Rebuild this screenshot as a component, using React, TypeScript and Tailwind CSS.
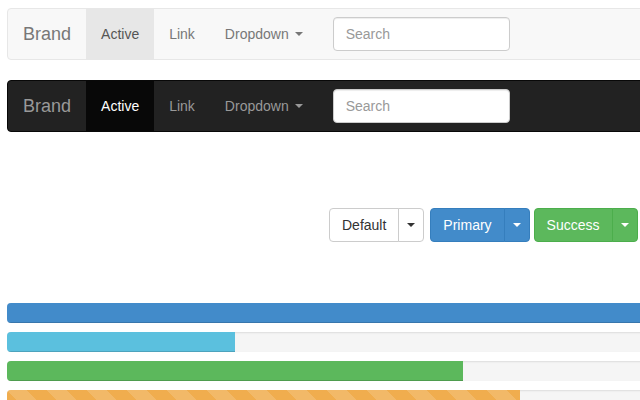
import React from "react";

const font = { fontFamily: '"Liberation Sans", Arial, Helvetica, sans-serif' };

function Caret({ color }: { color: string }) {
  return (
    <span
      className="inline-block h-0 w-0 align-middle border-l-4 border-r-4 border-t-4 border-l-transparent border-r-transparent"
      style={{ borderTopColor: color }}
    />
  );
}

function Navbar({ inverse }: { inverse?: boolean }) {
  const wrap = inverse
    ? "bg-[#222222] border-[#080808]"
    : "bg-[#f8f8f8] border-[#e7e7e7]";
  const brand = inverse ? "text-[#999999]" : "text-[#777777]";
  const link = inverse ? "text-[#999999]" : "text-[#777777]";
  const active = inverse
    ? "bg-[#080808] text-white"
    : "bg-[#e7e7e7] text-[#555555]";
  return (
    <div className={`flex h-[52px] w-[1140px] items-stretch rounded border ${wrap}`}>
      <div className={`flex items-center px-[15px] text-[18px] leading-5 ${brand}`}>Brand</div>
      <div className={`flex items-center px-[15px] text-[14px] leading-5 ${active}`}>Active</div>
      <div className={`flex items-center px-[15px] text-[14px] leading-5 ${link}`}>Link</div>
      <div className={`flex items-center gap-[6px] px-[15px] text-[14px] leading-5 ${link}`}>
        Dropdown <Caret color={inverse ? "#999999" : "#777777"} />
      </div>
      <div className="flex items-center px-[15px]">
        <input
          placeholder="Search"
          className="h-[34px] w-[177px] rounded border border-[#cccccc] bg-white px-3 text-[14px] text-[#555555] shadow-[inset_0_1px_1px_rgba(0,0,0,0.075)] outline-none placeholder:text-[#999999]"
          style={font}
        />
      </div>
    </div>
  );
}

type BtnKind = "default" | "primary" | "success";

function SplitButton({
  label,
  kind,
  className = "",
}: {
  label: string;
  kind: BtnKind;
  className?: string;
}) {
  const styles: Record<BtnKind, string> = {
    default: "bg-white border-[#cccccc] text-[#333333]",
    primary: "bg-[#428bca] border-[#357ebd] text-white",
    success: "bg-[#5cb85c] border-[#4cae4c] text-white",
  };
  const caret = kind === "default" ? "#333333" : "#ffffff";
  return (
    <div className={`flex ${className}`}>
      <div
        className={`flex h-[34px] items-center rounded-l border px-3 text-[14px] leading-5 ${styles[kind]}`}
      >
        {label}
      </div>
      <div
        className={`-ml-px flex h-[34px] items-center rounded-r border px-2 ${styles[kind]}`}
      >
        <Caret color={caret} />
      </div>
    </div>
  );
}

function Progress({
  pct,
  color,
  striped,
}: {
  pct: number;
  color: string;
  striped?: boolean;
}) {
  return (
    <div className="h-5 w-[1140px] overflow-hidden rounded bg-[#f5f5f5] shadow-[inset_0_1px_2px_rgba(0,0,0,0.1)]">
      <div
        className={`h-full shadow-[inset_0_-1px_0_rgba(0,0,0,0.15)] ${color} ${
          striped
            ? "bg-[linear-gradient(45deg,rgba(255,255,255,0.15)_25%,transparent_25%,transparent_50%,rgba(255,255,255,0.15)_50%,rgba(255,255,255,0.15)_75%,transparent_75%,transparent)] bg-[length:40px_40px]"
            : ""
        }`}
        style={{ width: `${pct}%` }}
      />
    </div>
  );
}

export default function App() {
  return (
    <div className="h-[400px] w-[640px] overflow-hidden bg-white" style={font}>
      <div className="w-[1140px] pl-[7px] pt-[8px]">
        <Navbar />
        <div className="mt-5">
          <Navbar inverse />
        </div>
        <div className="ml-[322px] mt-[76px] flex">
          <SplitButton label="Default" kind="default" />
          <SplitButton label="Primary" kind="primary" className="ml-[6px]" />
          <SplitButton label="Success" kind="success" className="ml-[4px]" />
        </div>
        <div className="mt-[61px] flex flex-col gap-[9px]">
          <Progress pct={60} color="bg-[#428bca]" />
          <Progress pct={20} color="bg-[#5bc0de]" />
          <Progress pct={40} color="bg-[#5cb85c]" />
          <Progress pct={45} color="bg-[#f0ad4e]" striped />
        </div>
      </div>
    </div>
  );
}
